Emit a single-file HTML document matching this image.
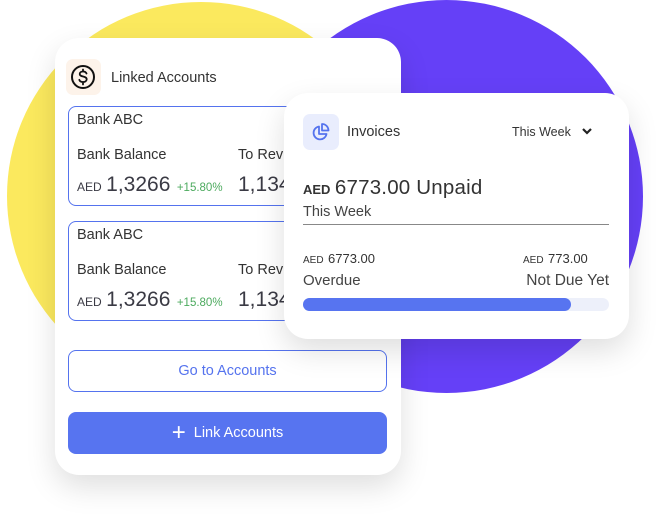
<!DOCTYPE html>
<html><head><style>
*{margin:0;padding:0;box-sizing:border-box}
body{width:667px;height:515px;background:#fff;position:relative;overflow:hidden;font-family:"Liberation Sans",sans-serif;color:#333}
.c{position:absolute;border-radius:50%}
.card{position:absolute;background:#fff;border-radius:24px;box-shadow:0 12px 30px rgba(0,0,0,0.13)}
.box{position:absolute;left:13px;width:300px;height:100px;border:1px solid #5573ee;border-radius:8px}
.t{position:absolute;white-space:nowrap}
</style></head><body>
<div class="c" style="left:7px;top:2px;width:388px;height:388px;background:#fbe95e"></div>
<div class="c" style="left:250px;top:0;width:393px;height:393px;background:#6540f7"></div>
<div class="card" style="left:55px;top:38px;width:346px;height:437px">
 <div style="position:absolute;left:11px;top:21px;width:35px;height:36px;background:#fdf3ea;border-radius:7px"></div>
 <svg style="position:absolute;left:15px;top:26px" width="26" height="26" viewBox="0 0 26 26"><circle cx="13" cy="13" r="11" fill="none" stroke="#111" stroke-width="2"/><path d="M16.5 9.5c-.5-1.3-1.8-2-3.5-2-2 0-3.3 1-3.3 2.5 0 3.3 7 1.8 7 5.3 0 1.6-1.5 2.7-3.7 2.7-1.8 0-3.2-.8-3.7-2.2M13 5.5v2M13 18v2.5" fill="none" stroke="#111" stroke-width="1.8" stroke-linecap="round"/></svg>
 <div class="t" style="left:56px;top:32px;font-size:14.5px;color:#333">Linked Accounts</div>
 <div class="box" style="top:68px">
  <div class="t" style="left:8px;top:5px;font-size:14.5px;color:#333">Bank ABC</div>
  <div class="t" style="left:8px;top:40px;font-size:14.5px;color:#333">Bank Balance</div>
  <div class="t" style="left:169px;top:40px;font-size:14.5px;color:#333">To Rev</div>
  <div class="t" style="left:8px;top:66px;color:#3a3a44"><span style="font-size:12px">AED</span> <span style="font-size:21px">1,3266</span> <span style="font-size:11.5px;color:#4caa5e;margin-left:2px">+15.80%</span></div>
  <div class="t" style="left:169px;top:66px;font-size:21px;color:#3a3a44">1,134</div>
 </div>
 <div class="box" style="top:183px">
  <div class="t" style="left:8px;top:5px;font-size:14.5px;color:#333">Bank ABC</div>
  <div class="t" style="left:8px;top:40px;font-size:14.5px;color:#333">Bank Balance</div>
  <div class="t" style="left:169px;top:40px;font-size:14.5px;color:#333">To Rev</div>
  <div class="t" style="left:8px;top:66px;color:#3a3a44"><span style="font-size:12px">AED</span> <span style="font-size:21px">1,3266</span> <span style="font-size:11.5px;color:#4caa5e;margin-left:2px">+15.80%</span></div>
  <div class="t" style="left:169px;top:66px;font-size:21px;color:#3a3a44">1,134</div>
 </div>
 <div style="position:absolute;left:13px;top:312px;width:319px;height:42px;border:1px solid #5573ee;border-radius:8px;color:#5573ee;font-size:14.5px;text-align:center;line-height:40px">Go to Accounts</div>
 <div style="position:absolute;left:13px;top:374px;width:319px;height:42px;background:#5774f0;border-radius:8px;color:#fff;font-size:14.5px;text-align:center;line-height:42px"><span style="font-size:24px;vertical-align:-3px;margin-right:8px;font-weight:300">+</span>Link Accounts</div>
</div>
<div class="card" style="left:284px;top:93px;width:345px;height:246px">
 <div style="position:absolute;left:19px;top:21px;width:36px;height:36px;background:#e9edfd;border-radius:7px"></div>
 <svg style="position:absolute;left:27px;top:29px" width="20" height="20" viewBox="0 0 20 20" fill="none" stroke="#5573ee" stroke-width="1.8" stroke-linejoin="round"><path d="M8 4.5a6.5 6.5 0 1 0 7.5 7.5H8z"/><path d="M11 2a6.5 6.5 0 0 1 6.5 6.5H11z"/></svg>
 <div class="t" style="left:63px;top:31px;font-size:14.5px;color:#333">Invoices</div>
 <div class="t" style="left:228px;top:32px;font-size:12.5px;color:#333">This Week</div>
 <svg style="position:absolute;left:297px;top:34px" width="12" height="9" viewBox="0 0 12 9"><path d="M2 2l4 4 4-4" fill="none" stroke="#222" stroke-width="2.2"/></svg>
 <div class="t" style="left:19px;top:83px;color:#333"><span style="font-size:13px;font-weight:bold">AED</span> <span style="font-size:20.5px;letter-spacing:0.2px">6773.00 Unpaid</span></div>
 <div class="t" style="left:19px;top:111px;font-size:14.5px;color:#444">This Week</div>
 <div style="position:absolute;left:19px;top:131px;width:306px;height:1px;background:#888"></div>
 <div class="t" style="left:19px;top:157px;color:#333"><span style="font-size:10px">AED</span> <span style="font-size:13px">6773.00</span></div>
 <div class="t" style="left:239px;top:157px;color:#333"><span style="font-size:10px">AED</span> <span style="font-size:13px">773.00</span></div>
 <div class="t" style="left:19px;top:179px;font-size:15px;color:#444">Overdue</div>
 <div class="t" style="right:20px;top:179px;font-size:15.5px;color:#444">Not Due Yet</div>
 <div style="position:absolute;left:19px;top:205px;width:306px;height:13px;background:#edf0fa;border-radius:7px"><div style="width:268px;height:13px;background:#5774f0;border-radius:7px"></div></div>
</div>
</body></html>
